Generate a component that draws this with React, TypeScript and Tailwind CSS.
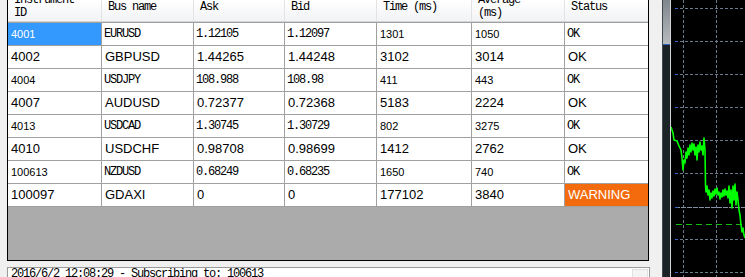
import React from "react";

const mono = "font-['Liberation_Mono',monospace] text-[12px] tracking-[-1.2px]";
const small = "font-['Liberation_Sans',Arial,sans-serif] text-[11px]";
const big = "font-['Liberation_Sans',Arial,sans-serif] text-[13px]";

const widths = ["w-[94px]", "w-[92px]", "w-[91px]", "w-[92px]", "w-[95px]", "w-[93px]", "w-[83px]"];

const rows = [
    ["4001", "EURUSD", "1.12105", "1.12097", "1301", "1050", "OK"],
    ["4002", "GBPUSD", "1.44265", "1.44248", "3102", "3014", "OK"],
    ["4004", "USDJPY", "108.988", "108.98", "411", "443", "OK"],
    ["4007", "AUDUSD", "0.72377", "0.72368", "5183", "2224", "OK"],
    ["4013", "USDCAD", "1.30745", "1.30729", "802", "3275", "OK"],
    ["4010", "USDCHF", "0.98708", "0.98699", "1412", "2762", "OK"],
    ["100613", "NZDUSD", "0.68249", "0.68235", "1650", "740", "OK"],
    ["100097", "GDAXI", "0", "0", "177102", "3840", "WARNING"],
];

const lightCols = [small, mono, mono, mono, small, small, mono];

const green: [number, number][] = [
    [671, 127], [673, 133], [674, 140], [677, 141], [679, 146], [681, 150], [682, 158], [683, 170],
    [684, 160], [685, 163], [686, 152], [687, 158], [688, 148], [689, 155], [690, 145], [691, 152],
    [692, 143], [693, 150], [694, 144], [695, 155], [696, 147], [697, 160], [698, 145], [699, 152],
    [700, 142], [701, 150], [702, 146], [703, 155], [704, 138], [705, 150], [705.5, 185], [706, 192],
    [707, 186], [708, 195], [709, 190], [710, 200], [711, 193], [712, 198], [713, 191], [714, 196],
    [715, 189], [716, 194], [717, 188], [718, 195], [719, 192], [720, 199], [721, 193], [722, 197],
    [723, 190], [724, 196], [725, 189], [726, 195], [727, 191], [728, 198], [729, 186], [730, 203],
    [731, 190], [732, 208], [733, 186], [734, 200], [735, 184], [736, 205], [737, 192], [738, 200],
    [739, 210], [740, 215], [741, 225], [742, 232], [743, 228], [744, 235], [745, 238],
];

function HeaderCell({ i, lines }: { i: number; lines: string[] }) {
    const last = i === 6;
    return (
        <div
            className={`${widths[i]} h-[21px] overflow-hidden pl-[6px] ${last ? "" : "border-r border-[#e3e3e3]"} ${mono} text-black leading-[13px]`}
        >
            <div className={lines.length > 1 ? "-mt-[6px]" : "pt-[1px]"}>
                {lines.map((l) => (
                    <div key={l} className="whitespace-nowrap">
                        {l}
                    </div>
                ))}
            </div>
        </div>
    );
}

function Chart() {
    const hy = [8, 41, 74, 107, 140, 173, 239, 272];
    return (
        <svg width="74" height="277" viewBox="671 0 74 277" className="block bg-black">
            {hy.map((y) => (
                <g key={y}>
                    <line x1="675" y1={y + 0.5} x2="745" y2={y + 0.5} stroke="#6b7a8c" strokeDasharray="3 2" />
                    <line x1="675" y1={y + 0.5} x2="678" y2={y + 0.5} stroke="#3a64c8" />
                </g>
            ))}
            <line x1="683.5" y1="0" x2="683.5" y2="277" stroke="#6b7a8c" strokeDasharray="3 2" />
            <line x1="716.5" y1="0" x2="716.5" y2="277" stroke="#6b7a8c" strokeDasharray="3 2" />
            <line x1="675" y1="207.5" x2="745" y2="207.5" stroke="#8592a2" strokeDasharray="5 1" />
            <line x1="675" y1="207.5" x2="678" y2="207.5" stroke="#3a64c8" />
            <line x1="676" y1="224.5" x2="745" y2="224.5" stroke="#10c010" strokeDasharray="6 4" />
            <polyline
                points={green.map((p) => p.join(",")).join(" ")}
                fill="none"
                stroke="#00ff00"
                strokeWidth="1.6"
                strokeLinejoin="round"
            />
        </svg>
    );
}

export default function App() {
    return (
        <div className="flex h-[277px] w-[745px] overflow-hidden bg-[#f0f0f0]">
            <div className="flex w-[662px] flex-col">
                <div className="ml-[7px] flex w-[642px] flex-col border-x border-b border-black">
                    <div className="flex bg-gradient-to-b from-white to-[#f2f3f5]">
                        <HeaderCell i={0} lines={["Instrument", "ID"]} />
                        <HeaderCell i={1} lines={["Bus name"]} />
                        <HeaderCell i={2} lines={["Ask"]} />
                        <HeaderCell i={3} lines={["Bid"]} />
                        <HeaderCell i={4} lines={["Time (ms)"]} />
                        <HeaderCell i={5} lines={["Average", "(ms)"]} />
                        <HeaderCell i={6} lines={["Status"]} />
                    </div>
                    <div className="h-px bg-[#d5d5d5]" />
                    <div className="h-px bg-[#a0a0a0]" />
                    {rows.map((row, r) => (
                        <div key={row[0]} className="flex border-b border-[#a0a0a0] bg-white">
                            {row.map((v, c) => {
                                const font = r % 2 === 0 ? lightCols[c] : big;
                                const selected = r === 0 && c === 0;
                                const warn = v === "WARNING";
                                return (
                                    <div
                                        key={c}
                                        className={`${widths[c]} flex h-[22px] items-center whitespace-nowrap ${
                                            c === 6 ? "" : "border-r border-[#a0a0a0]"
                                        } ${font === mono ? "pl-[2px]" : "pl-[3px]"} ${font} ${
                                            selected
                                                ? "bg-[#3399ff] text-white"
                                                : warn
                                                  ? "bg-[#f36b0d] text-white"
                                                  : "text-black"
                                        }`}
                                    >
                                        {v}
                                    </div>
                                );
                            })}
                        </div>
                    ))}
                    <div className="h-[53px] bg-[#ababab]" />
                </div>
                <div className="ml-[7px] mt-[6px] flex h-[20px] w-[643px] border border-[#9a9a9a] bg-white">
                    <div className={`flex-1 pl-[3px] leading-[12px] ${mono} text-black`}>
                        2016/6/2 12:08:29 - Subscribing to: 100613
                    </div>
                    <div className="mr-px mt-px w-[16px] border border-[#e0e0e0] bg-[#f4f4f4]" />
                </div>
            </div>
            <div className="flex w-[8px] flex-col border-l border-[#40474d]">
                <div className="h-[44px] bg-gradient-to-b from-[#80878d] to-[#b7bbbe]" />
                <div className="h-px bg-[#3060c0]" />
                <div className="flex-1 bg-[#1b2327]" />
            </div>
            <div className="w-px bg-[#d0d4d8]" />
            <Chart />
        </div>
    );
}
